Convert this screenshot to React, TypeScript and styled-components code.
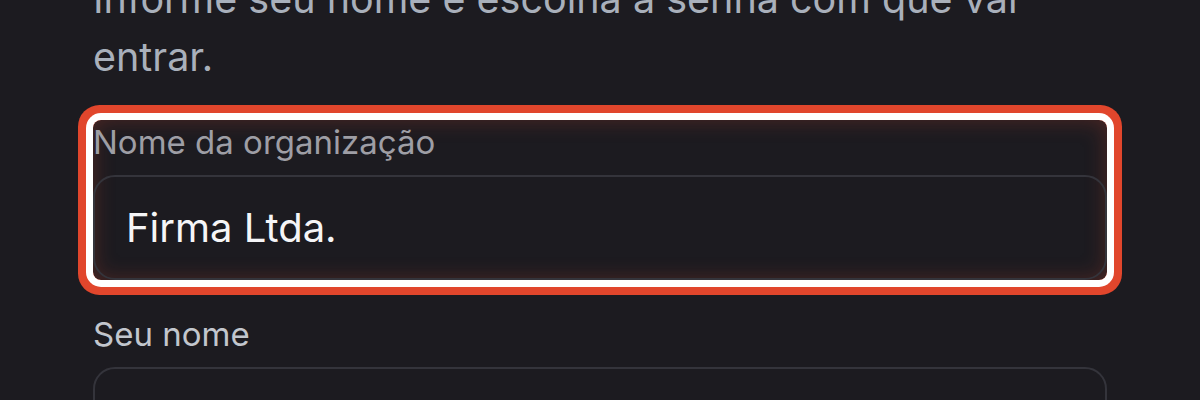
import React from "react";
import styled, { createGlobalStyle } from "styled-components";

const GlobalStyle = createGlobalStyle`
  html, body {
    margin: 0;
    padding: 0;
    background: #1c1b20;
    font-family: Inter, "Noto Sans", sans-serif;
    overflow: hidden;
  }
`;

const Page = styled.main`
  padding: 0 93px 0 93px;
  margin-top: -30px;
  display: flex;
  flex-direction: column;
`;

const Intro = styled.p`
  margin: 0 0 34px;
  max-width: 930px;
  font-size: 39.5px;
  line-height: 58px;
  color: #a9b0bb;
`;

const Form = styled.form`
  display: flex;
  flex-direction: column;
  gap: 32px;
`;

const Field = styled.div<{ $highlight?: boolean }>`
  display: flex;
  flex-direction: column;
  gap: 11px;
  border-radius: 8px;
  ${({ $highlight }) =>
    $highlight &&
    `
    box-shadow: inset 0 0 22px rgba(214, 72, 48, 0.28),
      0 0 0 7px #ffffff,
      0 0 0 15px #e1462c;
  `}
`;

const Label = styled.label<{ $dim?: boolean }>`
  font-size: 33px;
  line-height: 44px;
  color: ${({ $dim }) => ($dim ? "#9e9ea5" : "#c2c6cd")};
`;

const Input = styled.input`
  box-sizing: border-box;
  height: 105px;
  width: 100%;
  padding: 0 31px;
  border: 2px solid #34343b;
  border-radius: 22px;
  background: transparent;
  font-family: inherit;
  font-size: 40px;
  color: #f5f5f7;
  outline: none;
`;

export default function App() {
  return (
    <>
      <GlobalStyle />
      <Page>
        <Intro>Informe seu nome e escolha a senha com que vai entrar.</Intro>
        <Form>
          <Field $highlight>
            <Label $dim htmlFor="org">Nome da organização</Label>
            <Input id="org" defaultValue="Firma Ltda." />
          </Field>
          <Field>
            <Label htmlFor="name">Seu nome</Label>
            <Input id="name" />
          </Field>
        </Form>
      </Page>
    </>
  );
}
